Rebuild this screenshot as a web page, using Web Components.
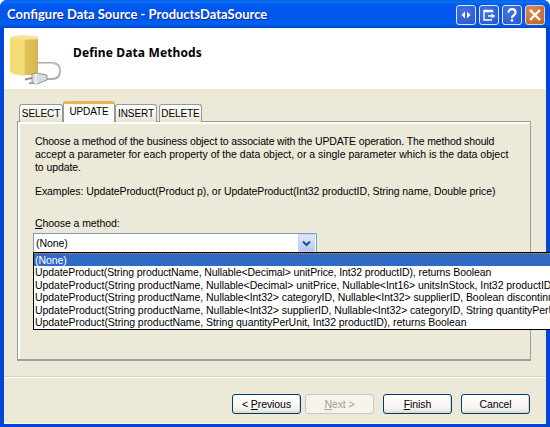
<!DOCTYPE html>
<html><head><meta charset="utf-8">
<style>
html,body{margin:0;padding:0;width:550px;height:427px;overflow:hidden;background:#fff}
</style></head>
<body>
<x-window caption="Configure Data Source - ProductsDataSource">
  <x-wizard-header heading="Define Data Methods"></x-wizard-header>
  <x-tab-view>
    <x-tab style="width:44px">SELECT</x-tab><x-tab active style="width:52px">UPDATE</x-tab><x-tab style="width:42px;margin-right:2px">INSERT</x-tab><x-tab style="width:43px">DELETE</x-tab>
    <x-method-panel slot="panel"></x-method-panel>
  </x-tab-view>
  <x-footer>
    <x-button><span>&lt; <u>P</u>revious</span></x-button>
    <x-button disabled><span><u>N</u>ext &gt;</span></x-button>
    <x-button class="gap"><span><u>F</u>inish</span></x-button>
    <x-button class="gap"><span>Cancel</span></x-button>
  </x-footer>
</x-window>
<script>
function def(name,css,html){
  customElements.define(name,class extends HTMLElement{
    constructor(){super();const r=this.attachShadow({mode:'open'});
      r.innerHTML='<style>'+css+'</style>'+(typeof html==='function'?html(this):html);}
  });
}
const SZ='font:10.500px/13px "Liberation Sans",sans-serif;letter-spacing:-.08px;';
def('x-window',`
:host{display:flex;flex-direction:column;width:550px;height:427px;box-sizing:border-box;background:#0047d6;border-radius:7px 7px 0 0;overflow:hidden;position:relative;font-family:"Liberation Sans",sans-serif;font-size:11px;color:#000}
.bar{height:28px;flex:none;display:flex;align-items:center;padding:0 5px 0 7px;background:linear-gradient(#0a5ee8 0,#0a72f5 2px,#0058ee 5px,#0055e8 16px,#0060f0 24px,#0046c8 28px)}
.cap{flex:1;font:bold 13px Lato,sans-serif;color:#fff;text-shadow:1px 1px 0 #0f2fa0;white-space:nowrap}
.btns{display:flex;gap:3px;margin-top:2px}
.b{width:20px;height:20px;box-sizing:border-box;border:1px solid #dfe6f8;border-radius:3px;background:radial-gradient(circle at 35% 30%,#3f74e6,#2a55cc);display:block}
.b.x{background:radial-gradient(circle at 30% 25%,#dd8d58,#bd5f28);border-color:#e8d4c4}
.body{flex:1;display:flex;flex-direction:column;margin:0 4px 4px 4px;background:#ece9d8;box-shadow:0 1px 0 #fff8c8;min-height:0}
`,h=>`<div class="bar"><div class="cap">${h.getAttribute('caption')}</div><div class="btns">
<svg class="b" viewBox="0 0 18 18"><path d="M8 5.500v7L4.500 9zM10 5.500v7L13.500 9z" fill="#fff"/></svg>
<svg class="b" viewBox="0 0 18 18"><path d="M4 4.500h9M4 4v10h8" fill="none" stroke="#fff" stroke-width="1.400"/><path d="M3.500 5.500h10" stroke="#fff" stroke-width="1.500"/><path d="M8 10h4" stroke="#fff" stroke-width="1.500"/><path d="M11.500 7.500L15.500 10l-4 2.500z" fill="#fff"/></svg>
<svg class="b" viewBox="0 0 18 18"><path d="M5.500 6.500C5.500 2 12.500 2 12.500 6.500c0 3-3.500 2.500-3.500 5.500" fill="none" stroke="#fff" stroke-width="2.200"/><rect x="7.800" y="13.200" width="2.400" height="2.400" fill="#fff"/></svg>
<svg class="b x" viewBox="0 0 18 18"><path d="M4 4l10 10M14 4L4 14" stroke="#fff" stroke-width="2.400"/></svg>
</div></div><div class="body"><slot></slot></div>`);
def('x-wizard-header',`
:host{display:flex;height:61px;flex:none;background:#fff}
svg{width:62px;height:58px;margin:2px 0 0 1px;flex:none}
h1{font:bold 12px/14px "Noto Sans",sans-serif;margin:18px 0 0 6px;letter-spacing:.14px}
`,h=>`<svg viewBox="0 0 62 58">
<defs><linearGradient id="c" x1="0" x2="1"><stop offset="0" stop-color="#f3da72"/><stop offset=".5" stop-color="#f3dc78"/><stop offset=".55" stop-color="#e3c257"/><stop offset="1" stop-color="#d8b450"/></linearGradient></defs>
<path d="M5 8v34c4 3 12 4 18 3 6 0 10-2 10-3V8z" fill="url(#c)"/>
<path d="M5 8c0-1 2-2 3-2 6-1 20-1 25 1v2c-8 1-22 1-28-1z" fill="#f6e595"/>
<path d="M33 33h14c6 0 8 4 8 8 0 5-3 8-8 8h-5" fill="none" stroke="#a9aeb3" stroke-width="2"/>
<path d="M33 33.500h14c6 0 7.500 4 7.500 8" fill="none" stroke="#dfe2e4" stroke-width=".7"/>
<path d="M27 44l5-1 10 2v5l-10 4-5-1z" fill="#d9dcde" stroke="#868c91" stroke-width=".9"/>
<path d="M31 44v10" stroke="#f4f5f5" stroke-width="1.500"/>
<path d="M20 49.500l7-1.500M24 53.500l4-1" stroke="#8b9095" stroke-width="1.800"/>
</svg><h1>${h.getAttribute('heading')}</h1>`);
def('x-tab-view',`
:host{display:block;flex:none;margin:13px 15px 0 13px;}
.strip{display:flex;align-items:flex-end;height:20px;padding-left:2px;position:relative;z-index:1;margin-bottom:-1px}
.panel{height:240px;box-sizing:border-box;border:1px solid #919b9c;border-right-color:#a0a0a0;border-bottom:2px solid #a0a0a0;box-shadow:inset 2px 2px 0 #fff}
`,`<div class="strip"><slot></slot></div><div class="panel"><slot name="panel"></slot></div>`);
def('x-tab',`
:host{display:block;box-sizing:border-box;flex:none;height:18px;text-align:center;border:1px solid #919b9c;border-bottom:0;border-radius:3px 3px 0 0;background:linear-gradient(#fff,#f3f1e6 60%,#e6e3d2);white-space:nowrap;font:10px/17px "Liberation Sans",sans-serif;letter-spacing:-.1px}
:host([active]){height:21px;padding-top:1px;background:#fbfbf7;border:0;border-top:3px solid #e8b458;border-left:1px solid #919b9c;border-right:1px solid #919b9c;line-height:14px}
`,`<slot></slot>`);
def('x-method-panel',`
:host{display:block;padding:13px 0 0 17px;${SZ}height:100%;box-sizing:border-box}
p{margin:0;white-space:nowrap}
.l1{letter-spacing:-.137px}.l2{letter-spacing:0}
.ex{margin-top:11px}
.lab{margin-top:19px}
x-combo{margin:3px 0 0 -2px}
`,`<p><span class="l1">Choose a method of the business object to associate with the UPDATE operation. The method should</span><br><span class="l2">accept a parameter for each property of the data object, or a single parameter which is the data object</span><br>to update.</p>
<p class="ex">Examples: UpdateProduct(Product p), or UpdateProduct(Int32 productID, String name, Double price)</p>
<p class="lab"><u>C</u>hoose a method:</p>
<x-combo></x-combo>`);
def('x-combo',`
:host{display:block;position:relative;width:284px;height:20px}
.f{box-sizing:border-box;height:20px;border:1px solid #7f9db9;background:#fff;display:flex;align-items:center;padding:0 1px 0 2px}
.t{flex:1}
.a{width:15px;height:16px;border:1px solid #c3d4f5;border-radius:1px;background:linear-gradient(#dfe9fc,#b4c8f2);display:flex;align-items:center;justify-content:center}
.l{position:absolute;left:0;top:19px;width:600px;box-sizing:border-box;height:78px;border:1px solid #000;background:#fff;letter-spacing:-.05px}
.i{height:12.600px;line-height:13px;padding-left:1px;white-space:nowrap}
.i.r{letter-spacing:-.1px}
.s{background:#316ac5;color:#fff;border-top:1px dotted #e08a30;height:13px;box-sizing:border-box;line-height:12px}
`,`<div class="f"><span class="t">(None)</span><span class="a"><svg width="9" height="7" viewBox="0 0 9 7"><path d="M1 1.500l3.500 3.500L8 1.500" fill="none" stroke="#2a4a90" stroke-width="2"/></svg></span></div>
<div class="l">
<div class="i s">(None)</div>
<div class="i r">UpdateProduct(String productName, Nullable&lt;Decimal&gt; unitPrice, Int32 productID), returns Boolean</div>
<div class="i">UpdateProduct(String productName, Nullable&lt;Decimal&gt; unitPrice, Nullable&lt;Int16&gt; unitsInStock, Int32 productID), returns Boolean</div>
<div class="i">UpdateProduct(String productName, Nullable&lt;Int32&gt; categoryID, Nullable&lt;Int32&gt; supplierID, Boolean discontinued, Int32 productID)</div>
<div class="i">UpdateProduct(String productName, Nullable&lt;Int32&gt; supplierID, Nullable&lt;Int32&gt; categoryID, String quantityPerUnit, Int32 productID)</div>
<div class="i">UpdateProduct(String productName, String quantityPerUnit, Int32 productID), returns Boolean</div>
</div>`);
def('x-footer',`
:host{display:flex;flex:none;justify-content:flex-end;align-items:flex-start;margin-top:16px;border-top:1px solid #fff;box-shadow:0 -1px 0 #d8d4c0;padding:16px 16px 0 0;gap:4px;height:46px;box-sizing:border-box}
::slotted(.gap){margin-left:5px}
`,`<slot></slot>`);
def('x-button',`
:host{display:flex;align-items:center;justify-content:center;box-sizing:border-box;width:69px;height:20px;border:1px solid #003c74;border-radius:3px;background:linear-gradient(#fff,#f5f4ef 70%,#e3e0d3);${SZ}color:#000;box-shadow:inset -1px -1px 0 #dcd8c8}
:host([disabled]){border-color:#cbc8bb;background:#f4f3ec;color:#a1a192;box-shadow:none}
`,`<slot></slot>`);
</script>
</body></html>
